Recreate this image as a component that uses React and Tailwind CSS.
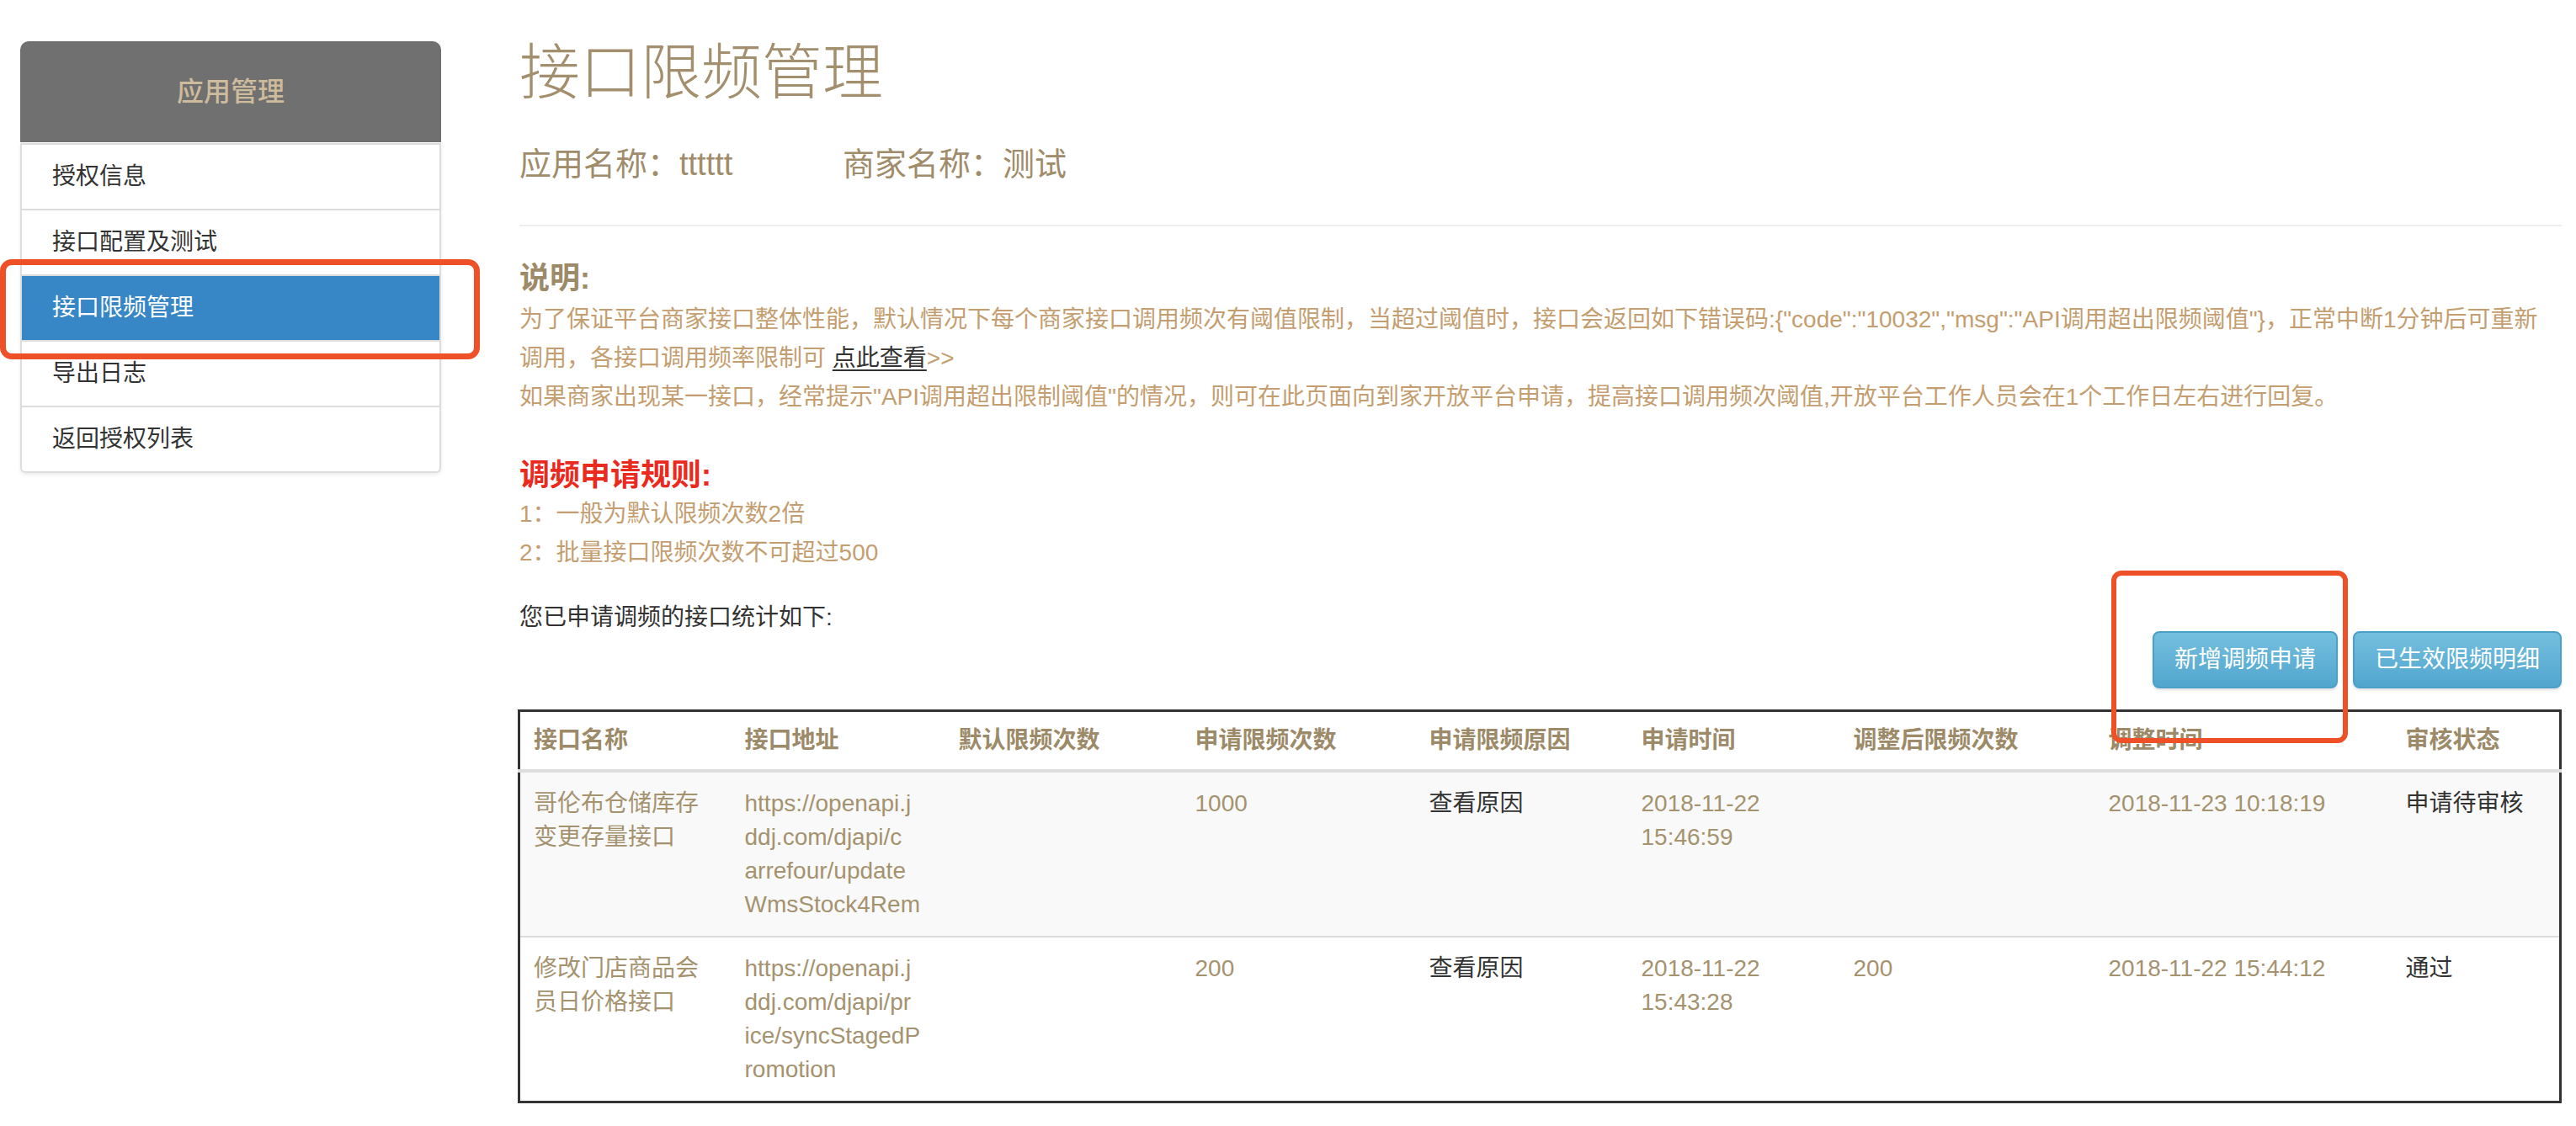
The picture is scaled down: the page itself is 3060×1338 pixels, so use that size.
const navItems = ["授权信息", "接口配置及测试", "接口限频管理", "导出日志", "返回授权列表"];

const columns = [
  { title: "接口名称", w: "w-[252px]" },
  { title: "接口地址", w: "w-[254px]" },
  { title: "默认限频次数", w: "w-[281px]" },
  { title: "申请限频次数", w: "w-[278px]" },
  { title: "申请限频原因", w: "w-[252px]" },
  { title: "申请时间", w: "w-[252px]" },
  { title: "调整后限频次数", w: "w-[303px]" },
  { title: "调整时间", w: "w-[353px]" },
  { title: "审核状态", w: "" },
];

const rows = [
  {
    name: ["哥伦布仓储库存", "变更存量接口"],
    url: ["https://openapi.j", "ddj.com/djapi/c", "arrefour/update", "WmsStock4Rem"],
    def: "",
    req: "1000",
    applied: ["2018-11-22", "15:46:59"],
    adjusted: "",
    adjustTime: "2018-11-23 10:18:19",
    status: "申请待审核",
  },
  {
    name: ["修改门店商品会", "员日价格接口"],
    url: ["https://openapi.j", "ddj.com/djapi/pr", "ice/syncStagedP", "romotion"],
    def: "",
    req: "200",
    applied: ["2018-11-22", "15:43:28"],
    adjusted: "200",
    adjustTime: "2018-11-22 15:44:12",
    status: "通过",
  },
];

function Lines({ items }) {
  return items.map((l) => (
    <span key={l} className="block">
      {l}
    </span>
  ));
}

function Sidebar() {
  return (
    <aside className="relative ml-[24px] mt-[49px] w-[500px] shrink-0 self-start">
      <div className="flex h-[120px] items-center justify-center rounded-t-[10px] bg-[#707070] text-[32px] font-medium text-[#cdbb9c]">
        应用管理
      </div>
      <div className="mt-[1px] rounded-b-[6px] border-x-2 border-b-2 border-[#ddd] shadow-[0_2px_4px_rgba(0,0,0,0.08)]">
        {navItems.map((item, i) => (
          <div
            key={item}
            className={
              i === 0
                ? "flex h-[78px] items-center border-t-2 border-[#ddd] px-[36px] text-[28px] text-[#333]"
                : item === "接口限频管理"
                ? "flex h-[78px] items-center border-t-2 border-[#ddd] bg-[#3787c6] px-[36px] text-[28px] text-white"
                : "flex h-[78px] items-center border-t-2 border-[#ddd] px-[36px] text-[28px] text-[#333]"
            }
          >
            {item}
          </div>
        ))}
      </div>
      {/* annotation box */}
      <div className="absolute left-[-24px] top-[259px] h-[119px] w-[570px] rounded-[14px] border-[7px] border-[#ee5128]" />
    </aside>
  );
}

export default function App() {
  return (
    <div className="flex min-h-[1338px] bg-white font-['Liberation_Sans','Noto_Sans_CJK_SC',sans-serif]">
      <Sidebar />

      <main className="relative ml-[93px] w-[2426px] shrink-0">
        <h1 className="mt-[50px] flex h-[72px] items-center text-[72px] font-light leading-none text-[#a38f6d]">
          接口限频管理
        </h1>

        <div className="mt-[53px] flex h-[40px] items-center text-[38px] leading-none text-[#a08c6a]">
          <span className="w-[384px]">应用名称：tttttt</span>
          <span>商家名称：测试</span>
        </div>

        <div className="mt-[52px] border-t-2 border-[#eee]" />

        <h3 className="mt-[39px] flex h-[46px] items-center text-[36px] font-bold text-[#9c8a68]">说明:</h3>
        <p className="mt-[3px] whitespace-nowrap text-[28px] leading-[46px] text-[#c49e70]">
          为了保证平台商家接口整体性能，默认情况下每个商家接口调用频次有阈值限制，当超过阈值时，接口会返回如下错误码:{'{"code":"10032","msg":"API调用超出限频阈值"}'}，正常中断1分钟后可重新
          <br />
          调用，各接口调用频率限制可{" "}
          <a className="text-[#333] underline underline-offset-4">点此查看</a>&gt;&gt;
          <br />
          如果商家出现某一接口，经常提示"API调用超出限制阈值"的情况，则可在此页面向到家开放平台申请，提高接口调用频次阈值,开放平台工作人员会在1个工作日左右进行回复。
        </p>

        <h3 className="mt-[47px] flex h-[46px] items-center text-[36px] font-bold text-[#ea2a1e]">调频申请规则:</h3>
        <div className="text-[28px] leading-[46px] text-[#c49e70]">
          <p>1：一般为默认限频次数2倍</p>
          <p>2：批量接口限频次数不可超过500</p>
        </div>

        <div className="flex items-start justify-between">
          <p className="mt-[31px] text-[28px] leading-[46px] text-[#333]">您已申请调频的接口统计如下:</p>
          <div className="mt-[70px] flex gap-[18px]">
            <button className="h-[68px] rounded-[8px] border-2 border-[#4aa0c9] bg-gradient-to-b from-[#74bfdf] to-[#51a6ce] px-[24px] text-[28px] text-white shadow-[0_2px_3px_rgba(0,0,0,0.12)]">
              新增调频申请
            </button>
            <button className="h-[68px] rounded-[8px] border-2 border-[#4aa0c9] bg-gradient-to-b from-[#74bfdf] to-[#51a6ce] px-[24px] text-[28px] text-white shadow-[0_2px_3px_rgba(0,0,0,0.12)]">
              已生效限频明细
            </button>
          </div>
        </div>

        <table className="mt-[25px] ml-[-2px] w-[2428px] table-fixed border-collapse border-[3px] border-[#333] text-left text-[28px] leading-[40px]">
          <colgroup>
            {columns.map((c) => (
              <col key={c.title} className={c.w} />
            ))}
          </colgroup>
          <thead>
            <tr className="border-b-4 border-[#ddd]">
              {columns.map((c) => (
                <th key={c.title} className="px-[16px] py-[14px] font-bold text-[#9c8a68]">
                  {c.title}
                </th>
              ))}
            </tr>
          </thead>
          <tbody>
            {rows.map((r, i) => (
              <tr
                key={r.status}
                className={i === 0 ? "border-b-2 border-[#ddd] bg-[#f9f9f9] align-top" : "align-top"}
              >
                <td className="px-[16px] py-[17px] text-[#a5926f]">
                  <Lines items={r.name} />
                </td>
                <td className="px-[16px] py-[17px] text-[#a5926f]">
                  <Lines items={r.url} />
                </td>
                <td className="px-[16px] py-[17px] text-[#a5926f]">{r.def}</td>
                <td className="px-[16px] py-[17px] text-[#a5926f]">{r.req}</td>
                <td className="px-[16px] py-[17px] text-[#333]">查看原因</td>
                <td className="px-[16px] py-[17px] text-[#a5926f]">
                  <Lines items={r.applied} />
                </td>
                <td className="px-[16px] py-[17px] text-[#a5926f]">{r.adjusted}</td>
                <td className="px-[16px] py-[17px] whitespace-nowrap text-[#a5926f]">{r.adjustTime}</td>
                <td className="px-[16px] py-[17px] text-[#333]">{r.status}</td>
              </tr>
            ))}
          </tbody>
        </table>

        {/* annotation box */}
        <div className="absolute left-[1891px] top-[678px] h-[205px] w-[281px] rounded-[12px] border-[6px] border-[#ee5128]" />
      </main>
    </div>
  );
}
